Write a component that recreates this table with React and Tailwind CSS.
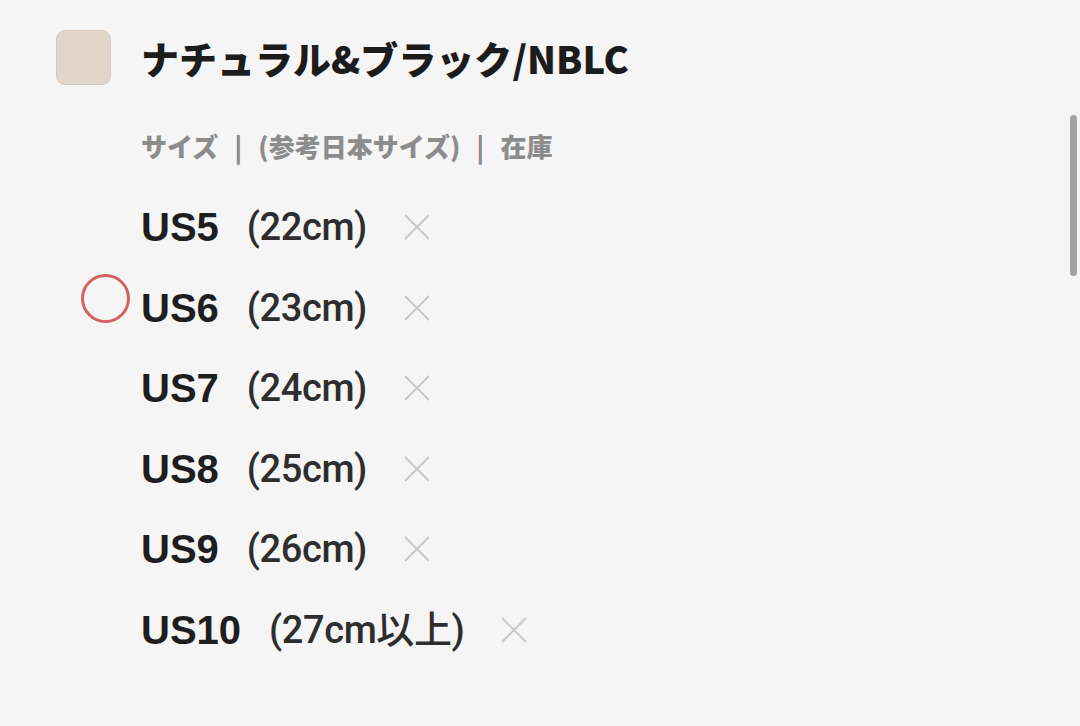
import React from 'react';

const sizes = [
  { us: 'US5', cm: '(22cm)' },
  { us: 'US6', cm: '(23cm)', marked: true },
  { us: 'US7', cm: '(24cm)' },
  { us: 'US8', cm: '(25cm)' },
  { us: 'US9', cm: '(26cm)' },
  { us: 'US10', cm: '(27cm以上)' },
];

const Cross = () => (
  <svg width="28" height="28" viewBox="0 0 28 28" className="shrink-0">
    <path d="M2 2 L26 26 M26 2 L2 26" stroke="#c6c6c6" strokeWidth="1.8" fill="none" />
  </svg>
);

const Sep = () => <span className="mx-[16px] text-[#8c8c8c]">|</span>;

const App = () => {
  return (
    <div
      className="relative w-full h-[726px] overflow-hidden bg-[#f5f5f5]"
      style={{ fontFamily: '"Liberation Sans", "Noto Sans CJK JP", sans-serif' }}
    >
      <div className="pl-[56px] pt-[30px]">
        {/* color header */}
        <div className="flex items-center gap-[30px] h-[55px]">
          <div className="w-[55px] h-[55px] rounded-[9px] bg-[#e2d6cb] border border-[#d3cbc3] shrink-0" />
          <h1
            className="text-[38px] font-black leading-none text-[#1c1c1c]"
            style={{ fontFamily: '"Noto Sans CJK JP", sans-serif' }}
          >
            ナチュラル&amp;ブラック/NBLC
          </h1>
        </div>

        <div className="ml-[85px]">
          <p
            className="mt-[46px] h-[30px] flex items-center text-[26px] font-black text-[#8c8c8c] leading-none"
            style={{ fontFamily: '"Noto Sans CJK JP", sans-serif' }}
          >
            サイズ<Sep />(参考日本サイズ)<Sep />在庫
          </p>

          <ul className="mt-[25.7px]">
            {sizes.map((s) => (
              <li key={s.us} className="relative flex items-center h-[80.6px]">
                {s.marked && (
                  <span className="absolute left-[-60px] top-[7px] w-[49px] h-[49px] rounded-full border-[3px] border-[#d4605f]" />
                )}
                <span className="text-[40px] font-bold text-[#1e1e1e] leading-none">{s.us}</span>
                <span
                  className="ml-[28px] text-[38px] font-medium text-[#2e2e2e] leading-none tracking-[-0.4px]"
                  style={{ fontFamily: 'Roboto, "Noto Sans CJK JP", sans-serif' }}
                >
                  {s.cm}
                </span>
                <span className="ml-[36px] flex">
                  <Cross />
                </span>
              </li>
            ))}
          </ul>
        </div>
      </div>

      <div className="absolute right-[3px] top-[115px] w-[7px] h-[161px] rounded-full bg-[#a3a3a3]" />
    </div>
  );
};

export default App;
